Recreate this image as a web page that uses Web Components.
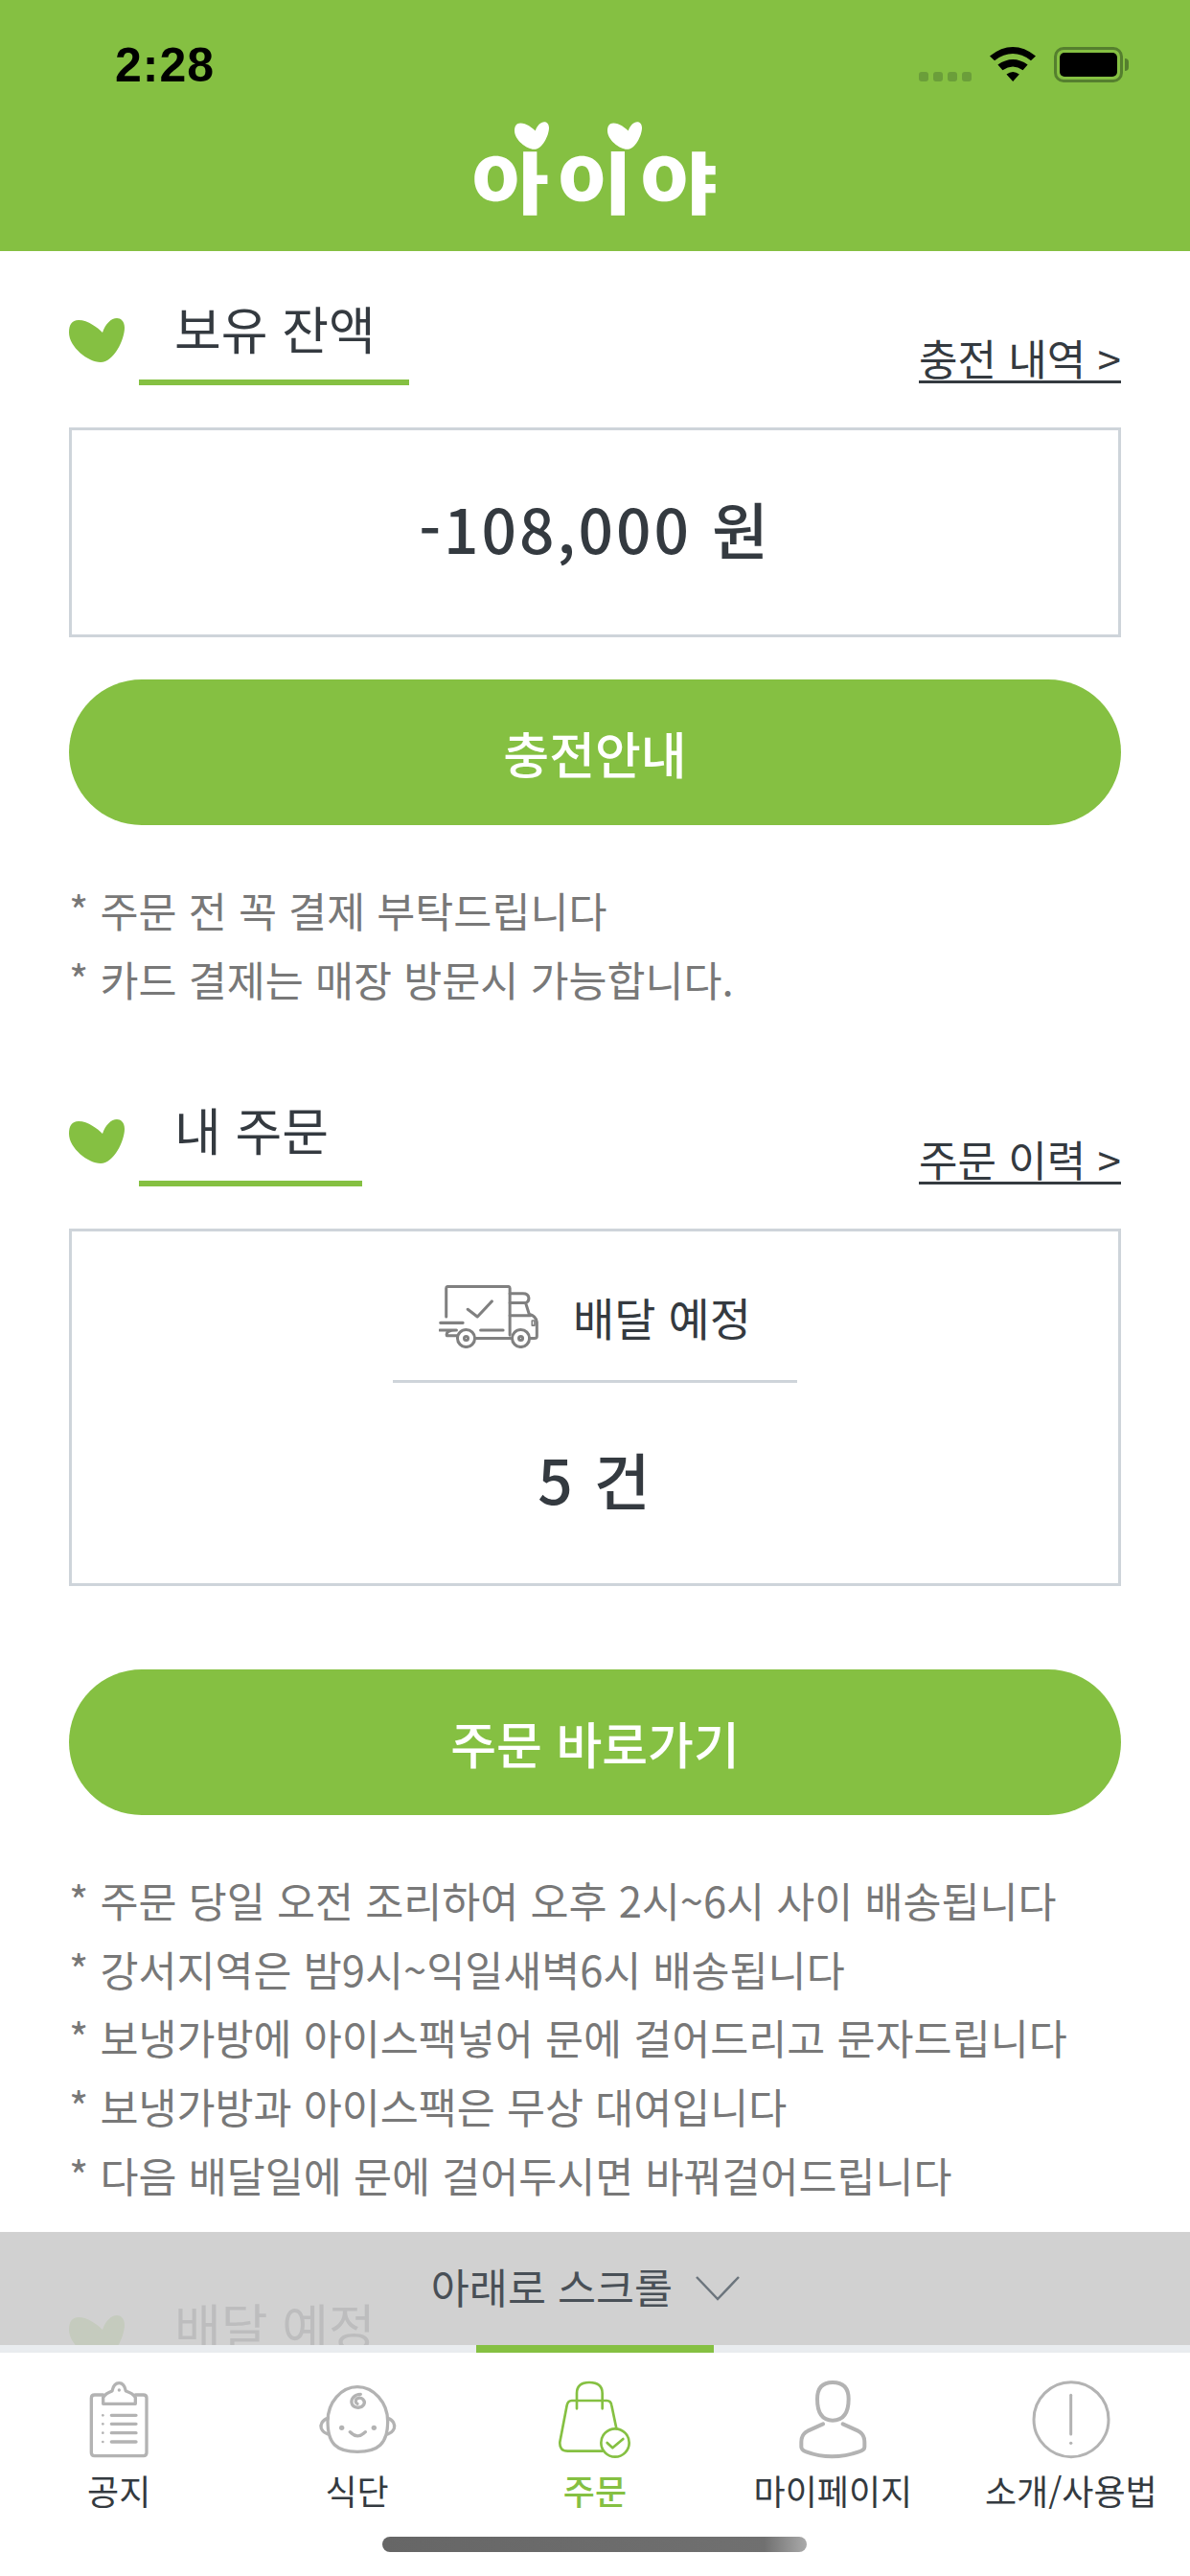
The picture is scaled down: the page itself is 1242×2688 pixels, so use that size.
<!DOCTYPE html>
<html lang="ko">
<head>
<meta charset="utf-8">
<title>아이야</title>
<style>
  html, body { margin: 0; padding: 0; background: #fff; }
  body { font-family: "Noto Sans CJK KR", "Noto Sans", sans-serif; color: #343a40; }
</style>
</head>
<body>
<app-shell>
  <status-bar slot="top"></status-bar>
  <app-header slot="top"></app-header>

  <title-row label="보유 잔액" link="충전 내역 &gt;"></title-row>
  <info-box style="height:219px;margin-top:44px">
    <span style="font-size:64px;font-weight:500;letter-spacing:3px;margin-bottom:12px">-108,000 원</span>
  </info-box>
  <pill-button style="margin-top:44px">충전안내</pill-button>
  <note-list>
    <span>* 주문 전 꼭 결제 부탁드립니다</span>
    <span>* 카드 결제는 매장 방문시 가능합니다.</span>
  </note-list>

  <title-row style="margin-top:41px" label="내 주문" link="주문 이력 &gt;"></title-row>
  <order-box style="margin-top:44px"></order-box>
  <pill-button style="margin-top:87px">주문 바로가기</pill-button>
  <note-list>
    <span>* 주문 당일 오전 조리하여 오후 2시~6시 사이 배송됩니다</span>
    <span>* 강서지역은 밤9시~익일새벽6시 배송됩니다</span>
    <span>* 보냉가방에 아이스팩넣어 문에 걸어드리고 문자드립니다</span>
    <span>* 보냉가방과 아이스팩은 무상 대여입니다</span>
    <span>* 다음 배달일에 문에 걸어두시면 바꿔걸어드립니다</span>
  </note-list>
  <title-row style="margin-top:41px" label="배달 예정"></title-row>

  <scroll-hint slot="over"></scroll-hint>
  <tab-bar slot="over"></tab-bar>
</app-shell>

<script>
const HEART = '<svg width="58" height="46" viewBox="0 0 58 46"><path fill="#85c042" d="M35 15C30 10 20 2 10 2C3 2 0 7 0 15C0 30 20 46 33 46C47 46 58 22 58 10C58 3 54 0 50 0C44 0 38 6 35 15Z"/></svg>';

class AppShell extends HTMLElement {
  constructor() {
    super();
    this.attachShadow({ mode: 'open' }).innerHTML = `
      <style>
        :host { display: flex; flex-direction: column; position: relative; width: 1242px; height: 2688px; overflow: hidden; background: #fff; }
        main { display: flex; flex-direction: column; padding: 0 72px; }
      </style>
      <slot name="top"></slot>
      <main><slot></slot></main>
      <slot name="over"></slot>`;
  }
}

class StatusBar extends HTMLElement {
  constructor() {
    super();
    this.attachShadow({ mode: 'open' }).innerHTML = `
      <style>
        :host { display: flex; align-items: flex-start; height: 100px; background: #85c042; color: #000; padding: 0 70px 0 120px; box-sizing: border-box; }
        .time { font: bold 50px/50px "Liberation Sans", sans-serif; margin-top: 43px; letter-spacing: 1px; flex: 1; }
        .dots { display: flex; gap: 5px; margin-top: 75px; }
        .dots i { width: 10px; height: 10px; border-radius: 3px; background: #6b9e3a; }
        .wifi { margin: 49px 19px 0 19px; }
        .batt { position: relative; width: 72px; height: 37px; margin-top: 49px; box-sizing: border-box; border: 3px solid #557f2e; border-radius: 10px; padding: 3px; }
        .batt b { display: block; height: 100%; background: #000; border-radius: 5px; }
        .batt::after { content: ""; position: absolute; right: -9px; top: 9px; width: 4px; height: 13px; background: #557f2e; border-radius: 0 4px 4px 0; }
      </style>
      <span class="time">2:28</span>
      <span class="dots"><i></i><i></i><i></i><i></i></span>
      <svg class="wifi" width="48" height="36" viewBox="0 0 143 107"><path d="M0 28Q72-28 143 28L128 42Q72 0 15 42ZM25 55Q72 22 118 55L103 72Q72 50 40 72ZM52 85Q72 70 92 85L72 107Z"/></svg>
      <span class="batt"><b></b></span>`;
  }
}

class AppHeader extends HTMLElement {
  constructor() {
    super();
    this.attachShadow({ mode: 'open' }).innerHTML = `
      <style>
        :host { display: flex; justify-content: center; position: relative; height: 162px; background: #85c042; }
        .logo { color: #fff; font-size: 70px; line-height: 70px; font-weight: 900; margin-top: 53px; letter-spacing: 6px; padding-left: 6px; transform: scaleX(1.25); white-space: nowrap; }
        svg { position: absolute; top: 27px; }
      </style>
      <span class="logo">아이야</span>
      <svg style="left:537px" width="36" height="29" viewBox="0 0 58 46"><path fill="#fff" d="M35 15C30 10 20 2 10 2C3 2 0 7 0 15C0 30 20 46 33 46C47 46 58 22 58 10C58 3 54 0 50 0C44 0 38 6 35 15Z"/></svg>
      <svg style="left:634px" width="36" height="29" viewBox="0 0 58 46"><path fill="#fff" d="M35 15C30 10 20 2 10 2C3 2 0 7 0 15C0 30 20 46 33 46C47 46 58 22 58 10C58 3 54 0 50 0C44 0 38 6 35 15Z"/></svg>`;
  }
}

class TitleRow extends HTMLElement {
  constructor() {
    super();
    const link = this.getAttribute('link');
    this.attachShadow({ mode: 'open' }).innerHTML = `
      <style>
        :host { display: flex; align-items: flex-end; height: 140px; }
        svg { margin: 0 15px 24px 0; flex: none; }
        h2 { margin: 0; font-size: 53px; line-height: 80px; font-weight: 400; padding: 0 35px 14px 37px; border-bottom: 6px solid #85c042; }
        a { margin-left: auto; font-size: 44px; line-height: 56px; color: #343a40; text-decoration: underline; text-underline-offset: 5px; text-decoration-thickness: 3px; margin-bottom: 1px; }
      </style>
      ${HEART}<h2>${this.getAttribute('label')}</h2>${link ? `<a>${link.replace('>', '&gt;')}</a>` : ''}`;
  }
}

class InfoBox extends HTMLElement {
  constructor() {
    super();
    this.attachShadow({ mode: 'open' }).innerHTML = `
      <style>
        :host { display: flex; align-items: center; justify-content: center; box-sizing: border-box; border: 3px solid #ced4da; }
      </style>
      <slot></slot>`;
  }
}

class OrderBox extends HTMLElement {
  constructor() {
    super();
    this.attachShadow({ mode: 'open' }).innerHTML = `
      <style>
        :host { display: flex; flex-direction: column; align-items: center; height: 373px; box-sizing: border-box; border: 3px solid #ced4da; }
        .head { display: flex; align-items: center; justify-content: center; gap: 36px; width: 422px; height: 158px; box-sizing: border-box; padding-top: 23px; border-bottom: 3px solid #ced4da; }
        .head span { font-size: 47px; line-height: 60px; }
        .count { font-size: 64px; line-height: 80px; font-weight: 500; margin-top: 59px; letter-spacing: 2px; }
      </style>
      <div class="head">
        <svg width="104" height="66" viewBox="0 0 310 196" fill="none" stroke="#808080" stroke-width="9" stroke-linecap="round" stroke-linejoin="round">
          <path d="M23 98V9Q23 4 28 4H216Q221 4 221 9V155"/>
          <path d="M221 26H262Q278 26 280 40Q280 52 270 55H221M221 94H285M270 55L281 90Q303 96 305 115V158Q305 165 297 165H283"/>
          <path d="M5 117H75M3 140H55Q20 140 25 157H58M130 140H200M112 165H228"/>
          <circle cx="85" cy="165" r="27"/><circle cx="85" cy="165" r="6"/>
          <circle cx="255" cy="165" r="27"/><circle cx="255" cy="165" r="6"/>
          <path d="M90 75L120 98L165 50"/>
          <path d="M290 110H298V125H290Z" stroke-width="5"/>
        </svg>
        <span>배달 예정</span>
      </div>
      <div class="count">5 건</div>`;
  }
}

class PillButton extends HTMLElement {
  constructor() {
    super();
    this.attachShadow({ mode: 'open' }).innerHTML = `
      <style>
        :host { display: flex; align-items: center; justify-content: center; height: 152px; border-radius: 76px; background: #85c042; color: #fff; font-size: 52px; font-weight: 500; }
      </style>
      <slot></slot>`;
  }
}

class NoteList extends HTMLElement {
  constructor() {
    super();
    this.attachShadow({ mode: 'open' }).innerHTML = `
      <style>
        :host { display: flex; flex-direction: column; margin-top: 53px; font-size: 43.5px; line-height: 71.6px; color: #787878; }
      </style>
      <slot></slot>`;
  }
}

class ScrollHint extends HTMLElement {
  constructor() {
    super();
    this.attachShadow({ mode: 'open' }).innerHTML = `
      <style>
        :host { position: absolute; left: 0; right: 0; top: 2329px; height: 118px; box-sizing: border-box; padding: 0 20px 6px 0; display: flex; align-items: center; justify-content: center; gap: 24px; background: rgba(204,204,204,.9); font-size: 43.5px; color: #495057; }
        svg { margin-top: 6px; }
      </style>
      <span>아래로 스크롤</span>
      <svg width="46" height="26" viewBox="0 0 46 26" fill="none" stroke="#6c757d" stroke-width="2.5"><path d="M1 1L23 24L45 1"/></svg>`;
  }
}

class TabBar extends HTMLElement {
  constructor() {
    super();
    this.attachShadow({ mode: 'open' }).innerHTML = `
      <style>
        :host { position: absolute; left: 0; right: 0; bottom: 0; height: 241px; display: flex; flex-direction: column; background: #fff; }
        .line { height: 8px; background: #e9ecef; display: flex; justify-content: center; }
        .line i { width: 248px; background: #85c042; }
        .tabs { display: grid; grid-template-columns: repeat(5, 1fr); }
        .bar { position: absolute; left: 399px; top: 200px; width: 443px; height: 16px; border-radius: 8px; background: linear-gradient(90deg, #666 0%, #707070 90%, #aaa 100%); }
      </style>
      <div class="line"><i></i></div>
      <div class="tabs">
        <tab-item label="공지">
          <svg width="90" height="90" viewBox="56 60 270 270" fill="none" stroke="#b3b3b3" stroke-width="10" stroke-linecap="round" stroke-linejoin="round">
            <path d="M142 117H115Q105 117 105 127V298Q105 308 115 308H268Q278 308 278 298V127Q278 117 268 117H243"/>
            <path d="M142 145V125Q150 112 170 105Q175 80 192 80Q208 80 213 105Q235 112 243 125V145Z"/>
            <path d="M168 181H245M168 208H245M168 236H245M168 264H245"/>
            <g fill="#b3b3b3" stroke="none"><circle cx="192" cy="102" r="5"/><circle cx="141" cy="181" r="4"/><circle cx="141" cy="208" r="4"/><circle cx="141" cy="236" r="4"/><circle cx="141" cy="264" r="4"/></g>
          </svg>
        </tab-item>
        <tab-item label="식단">
          <svg width="90" height="90" viewBox="800 60 270 270" fill="none" stroke="#b3b3b3" stroke-width="10" stroke-linecap="round" stroke-linejoin="round">
            <path d="M935 92C985 92 1030 140 1030 200C1030 270 1000 295 935 295C870 295 842 270 842 200C842 140 885 92 935 92Z"/>
            <path d="M843 190C825 195 818 210 822 222C826 232 835 238 845 240M1030 190C1048 195 1053 210 1050 222C1046 232 1038 238 1028 240"/>
            <path d="M945 115C925 115 915 130 917 142C920 158 945 162 955 148C962 135 948 122 935 128C928 132 928 142 935 145"/>
            <path d="M912 233Q935 258 960 233"/>
            <g fill="#b3b3b3" stroke="none"><circle cx="886" cy="220" r="8"/><circle cx="987" cy="220" r="8"/></g>
          </svg>
        </tab-item>
        <tab-item label="주문" active>
          <svg width="90" height="90" viewBox="110 60 270 270" fill="none" stroke="#85c042" stroke-width="8" stroke-linecap="round" stroke-linejoin="round">
            <path d="M188 160V112Q188 78 227 78Q268 78 268 112V160"/>
            <path d="M312 222L297 150Q295 135 282 135H172Q160 135 157 150L135 265Q133 293 160 293H268"/>
            <circle cx="308" cy="267" r="44"/>
            <path d="M283 267L300 283L333 255"/>
          </svg>
        </tab-item>
        <tab-item label="마이페이지">
          <svg width="90" height="90" viewBox="853 60 270 270" fill="none" stroke="#b3b3b3" stroke-width="12" stroke-linecap="round" stroke-linejoin="round">
            <path d="M988 78C1020 78 1038 95 1038 130C1038 175 1020 197 988 197C957 197 940 175 940 130C940 95 957 78 988 78Z"/>
            <path d="M958 208L910 230Q890 240 890 265V280Q890 290 905 295Q985 325 1070 295Q1088 290 1088 280V265Q1088 240 1068 230L1020 208"/>
          </svg>
        </tab-item>
        <tab-item label="소개/사용법">
          <svg width="90" height="90" viewBox="339 60 270 270" fill="none" stroke="#b3b3b3" stroke-width="9" stroke-linecap="round">
            <circle cx="474" cy="194" r="117"/>
            <path d="M473 118V240"/>
            <circle cx="473" cy="268" r="5" fill="#b3b3b3" stroke="none"/>
          </svg>
        </tab-item>
      </div>
      <div class="bar"></div>`;
  }
}

class TabItem extends HTMLElement {
  constructor() {
    super();
    const active = this.hasAttribute('active');
    this.attachShadow({ mode: 'open' }).innerHTML = `
      <style>
        :host { display: flex; flex-direction: column; align-items: center; padding-top: 25px; }
        span { font-size: 36px; line-height: 50px; margin-top: 3px; white-space: nowrap; color: ${active ? '#85c042' : '#343a40'}; font-weight: ${active ? 500 : 400}; }
      </style>
      <slot></slot>
      <span>${this.getAttribute('label')}</span>`;
  }
}

customElements.define('tab-item', TabItem);
customElements.define('app-shell', AppShell);
customElements.define('status-bar', StatusBar);
customElements.define('app-header', AppHeader);
customElements.define('title-row', TitleRow);
customElements.define('info-box', InfoBox);
customElements.define('order-box', OrderBox);
customElements.define('pill-button', PillButton);
customElements.define('note-list', NoteList);
customElements.define('scroll-hint', ScrollHint);
customElements.define('tab-bar', TabBar);
</script>
</body>
</html>
